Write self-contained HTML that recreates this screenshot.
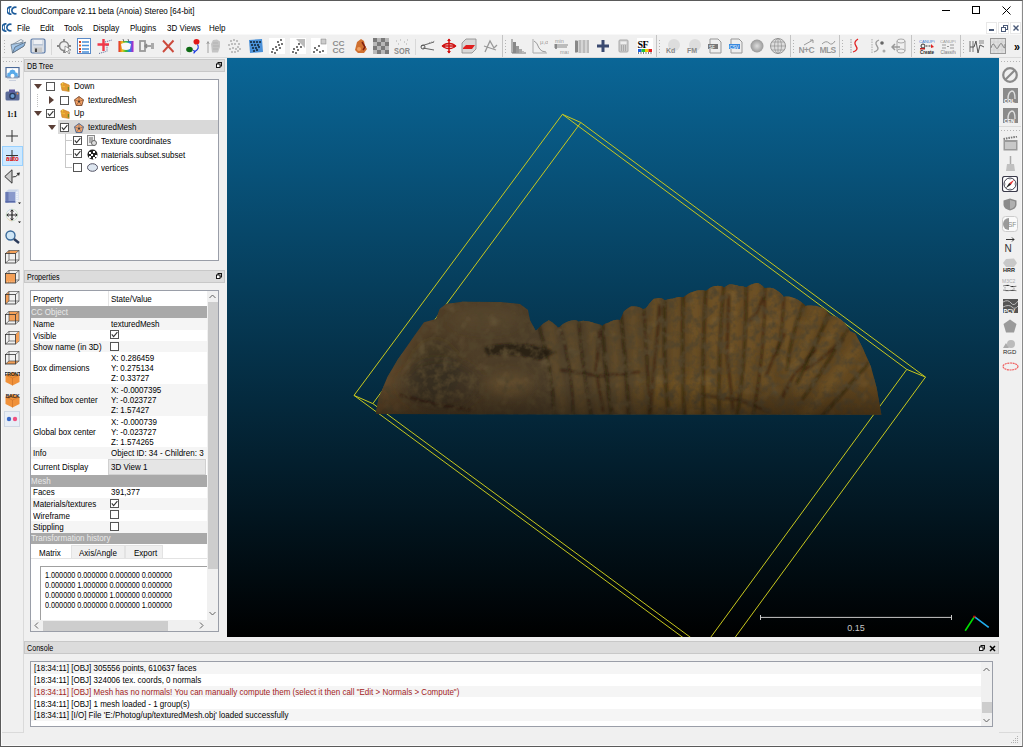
<!DOCTYPE html><html><head><meta charset="utf-8"><style>
html,body{margin:0;padding:0}
body{width:1023px;height:747px;overflow:hidden;background:#f0f0f0;position:relative;font-family:"Liberation Sans",sans-serif;font-size:9px;letter-spacing:0;color:#000}
.a{position:absolute}
.t{position:absolute;white-space:nowrap;line-height:11px;transform:scaleX(0.89);transform-origin:0 0}
.cb{position:absolute;width:7px;height:7px;border:1px solid #555;background:#fff}
</style></head><body>
<div class="a" style="left:0px;top:0px;width:1023px;height:747px;background:#f0f0f0"></div>
<div class="a" style="left:1px;top:1px;width:1021px;height:19px;background:#fff"></div>
<div class="a" style="left:1px;top:20px;width:1021px;height:14px;background:#fff"></div>
<div class="a" style="left:1px;top:34px;width:1021px;height:1px;background:#f8f8f8"></div>
<div class="a" style="left:1px;top:57px;width:1021px;height:1px;background:#dadada"></div>
<div class="t" style="left:20.5px;top:5.8px;">CloudCompare v2.11 beta (Anoia) Stereo [64-bit]</div>
<div class="t" style="left:16.5px;top:23.3px;">File</div>
<div class="t" style="left:39.5px;top:23.3px;">Edit</div>
<div class="t" style="left:64.0px;top:23.3px;">Tools</div>
<div class="t" style="left:93.0px;top:23.3px;">Display</div>
<div class="t" style="left:129.5px;top:23.3px;">Plugins</div>
<div class="t" style="left:166.5px;top:23.3px;">3D Views</div>
<div class="t" style="left:209.0px;top:23.3px;">Help</div>
<svg class="a" style="left:7px;top:6px;" width="11" height="9" viewBox="0 0 11 9"><g transform="scale(1.0)"><path d="M4.5 1 A3.6 3.6 0 1 0 4.5 8" fill="none" stroke="#1a5a9a" stroke-width="1.6"/><path d="M9.5 1.5 A3.3 3.3 0 1 0 9.5 7.5" fill="none" stroke="#1a5a9a" stroke-width="1.6"/><path d="M2.5 1V8" stroke="#1a5a9a" stroke-width="0.8"/></g></svg>
<svg class="a" style="left:2px;top:23px;" width="11" height="9" viewBox="0 0 11 9"><g transform="scale(1.0)"><path d="M4.5 1 A3.6 3.6 0 1 0 4.5 8" fill="none" stroke="#1a5a9a" stroke-width="1.6"/><path d="M9.5 1.5 A3.3 3.3 0 1 0 9.5 7.5" fill="none" stroke="#1a5a9a" stroke-width="1.6"/><path d="M2.5 1V8" stroke="#1a5a9a" stroke-width="0.8"/></g></svg>
<div class="a" style="left:942px;top:10px;width:8px;height:1px;background:#000"></div>
<div class="a" style="left:972px;top:6px;width:8px;height:8px;border:1px solid #000;box-sizing:border-box"></div>
<svg class="a" style="left:1002px;top:6px;" width="9" height="9" viewBox="0 0 9 9"><path d="M0.5 0.5L8.5 8.5M8.5 0.5L0.5 8.5" stroke="#000" stroke-width="1"/></svg>
<div class="a" style="left:986px;top:22px;width:11px;height:12px;background:#fff;border:1px solid #e8e8e8;box-sizing:border-box"></div>
<div class="a" style="left:998px;top:22px;width:11px;height:12px;background:#fff;border:1px solid #e8e8e8;box-sizing:border-box"></div>
<div class="a" style="left:1010px;top:22px;width:11px;height:12px;background:#fff;border:1px solid #e8e8e8;box-sizing:border-box"></div>
<div class="a" style="left:989px;top:29px;width:5px;height:1.5px;background:#4a5a78"></div>
<svg class="a" style="left:1001px;top:25px;" width="7" height="7" viewBox="0 0 7 7"><rect x="2.5" y="0.5" width="4" height="4" fill="none" stroke="#4a5a78"/><rect x="0.5" y="2.5" width="4" height="4" fill="#fff" stroke="#4a5a78"/></svg>
<svg class="a" style="left:1012.5px;top:25px;" width="6" height="6" viewBox="0 0 6 6"><path d="M0.5 0.5L5.5 5.5M5.5 0.5L0.5 5.5" stroke="#4a5a78" stroke-width="1.4"/></svg>
<svg width="0" height="0" style="position:absolute"><defs><linearGradient id="rb" x1="0" x2="1"><stop offset="0" stop-color="#e02020"/><stop offset="0.25" stop-color="#f0c020"/><stop offset="0.5" stop-color="#30c030"/><stop offset="0.75" stop-color="#2080f0"/><stop offset="1" stop-color="#c020c0"/></linearGradient></defs></svg>
<div class="a" style="left:4px;top:40px;width:1px;height:15px;background:repeating-linear-gradient(to bottom,#b4b4b4 0 1px,transparent 1px 3px)"></div>
<svg class="a" style="left:10px;top:38px;" width="16" height="16" viewBox="0 0 16 16"><path d="M1.5 7 L11 1.5 L13.5 3 L4 9 Z" fill="#f4f8fc" stroke="#7a8a9a" stroke-width="0.8"/><path d="M1 6.5 L2.5 15 L14 8 L12.5 4.5 Z" fill="#a8c8e8" stroke="#6a7a8a" stroke-width="0.8"/><path d="M2.5 15 L5 9 L15.5 4 L14 8 Z" fill="#90b8e0" stroke="#5a6a7a" stroke-width="0.8"/></svg>
<svg class="a" style="left:30px;top:38px;" width="16" height="16" viewBox="0 0 16 16"><rect x="1" y="1" width="14" height="14" rx="1.5" fill="#d8dde4" stroke="#5a7aa8" stroke-width="1.2"/><rect x="3" y="1.5" width="10" height="6" fill="#b8c4d4"/><rect x="3.5" y="2" width="9" height="4" fill="#eef0f4"/><rect x="4" y="9.5" width="8" height="5" fill="#c8c8c8"/><rect x="5" y="10.5" width="2" height="3.5" fill="#444"/></svg>
<div class="a" style="left:51px;top:39px;width:1px;height:16px;background:#d8d8d8"></div>
<svg class="a" style="left:56px;top:38px;" width="16" height="16" viewBox="0 0 16 16"><circle cx="8" cy="8" r="4.5" fill="none" stroke="#888" stroke-width="1.5"/><path d="M8 1V4M8 12V15M1 8H4M12 8H15" stroke="#888" stroke-width="1.8"/><path d="M9 8 L9 15 L11 13 L13 16 L14 15 L12 12 L15 12 Z" fill="#fff" stroke="#777" stroke-width="0.7"/></svg>
<svg class="a" style="left:76px;top:38px;" width="16" height="16" viewBox="0 0 16 16"><rect x="1.5" y="0.5" width="13" height="15" fill="#fff" stroke="#5a8ac8"/><rect x="3" y="3" width="2" height="2" fill="#d04020"/><rect x="3" y="6.5" width="2" height="2" fill="#e06020"/><rect x="3" y="10" width="2" height="2" fill="#d04020"/><rect x="3" y="13" width="2" height="1.5" fill="#c03020"/><path d="M6 4H13M6 7.5H13M6 11H13M6 14H13" stroke="#4a90d8" stroke-width="1.6"/></svg>
<svg class="a" style="left:97px;top:38px;" width="16" height="16" viewBox="0 0 16 16"><path d="M6.5 1V13M0.5 6.5H12" stroke="#f03848" stroke-width="2.4"/><path d="M8 4L15 2M10 7V14M2 15.5L9 13.5" stroke="#506090" stroke-width="0.9" stroke-dasharray="1.2 1"/></svg>
<svg class="a" style="left:118px;top:38px;" width="16" height="16" viewBox="0 0 16 16"><rect x="0.5" y="3" width="15" height="11" fill="url(#rb)"/><path d="M3 6 Q8 3 13 6 L12 11 Q8 13 4 11Z" fill="#f8f8f8"/><path d="M5 1 L6 4 M10 1 L11 4" stroke="#555" stroke-width="0.8"/></svg>
<svg class="a" style="left:139px;top:38px;" width="16" height="16" viewBox="0 0 16 16"><rect x="1" y="3" width="5" height="10" fill="none" stroke="#999" stroke-width="1.8"/><path d="M6 8H12M8 6 L6 8 L8 10" stroke="#888" stroke-width="1.5" fill="none"/><rect x="12" y="5" width="3" height="6" fill="#aaa"/></svg>
<svg class="a" style="left:160px;top:38px;" width="16" height="16" viewBox="0 0 16 16"><path d="M3 2.5L13.5 14M13.5 2.5L3 14" stroke="#cc4a3c" stroke-width="1.9"/></svg>
<div class="a" style="left:180px;top:39px;width:1px;height:16px;background:#d8d8d8"></div>
<svg class="a" style="left:185px;top:38px;" width="16" height="16" viewBox="0 0 16 16"><ellipse cx="11.5" cy="3.8" rx="3" ry="2.8" fill="#e01818"/><ellipse cx="4.5" cy="11.5" rx="3.3" ry="2.8" fill="#0e6a14"/><path d="M12.5 6.5 Q15 10.5 10 13.5 M8.2 12.2 L10 13.6 L8.6 15.4" stroke="#1838e0" stroke-width="1.2" fill="none"/></svg>
<svg class="a" style="left:206px;top:38px;" width="16" height="16" viewBox="0 0 16 16"><path d="M2 15V4M0.8 6L2 3.5L3.2 6" stroke="#999" stroke-width="0.9" fill="none"/><path d="M6 14.5 L5 6 L7 2 L11 1.5 L14 3.5 L14 9 L12 14.5 Z" fill="#c4c4c4"/><path d="M7 5L12 5M7 8L13 8M7 11L12 11" stroke="#aaa" stroke-width="0.6"/></svg>
<svg class="a" style="left:226px;top:38px;" width="16" height="16" viewBox="0 0 16 16"><circle cx="5" cy="3" r="0.75" fill="#777"/><circle cx="8" cy="2" r="0.75" fill="#777"/><circle cx="11" cy="3" r="0.75" fill="#777"/><circle cx="13" cy="6" r="0.75" fill="#777"/><circle cx="3" cy="7" r="0.75" fill="#777"/><circle cx="6" cy="6" r="0.75" fill="#777"/><circle cx="9" cy="6" r="0.75" fill="#777"/><circle cx="12" cy="9" r="0.75" fill="#777"/><circle cx="14" cy="11" r="0.75" fill="#777"/><circle cx="4" cy="11" r="0.75" fill="#777"/><circle cx="7" cy="10" r="0.75" fill="#777"/><circle cx="10" cy="11" r="0.75" fill="#777"/><circle cx="6" cy="14" r="0.75" fill="#777"/><circle cx="9" cy="14" r="0.75" fill="#777"/><circle cx="12" cy="13" r="0.75" fill="#777"/></svg>
<svg class="a" style="left:248px;top:38px;" width="16" height="16" viewBox="0 0 16 16"><path d="M1 2 L14 1 L15 14 L2 15 Z" fill="#4a90d8"/><circle cx="3" cy="4" r="1" fill="#123"/><circle cx="6" cy="4" r="1" fill="#123"/><circle cx="9" cy="4" r="1" fill="#123"/><circle cx="12" cy="4" r="1" fill="#123"/><circle cx="4" cy="7" r="1" fill="#123"/><circle cx="7" cy="7" r="1" fill="#123"/><circle cx="10" cy="7" r="1" fill="#123"/><circle cx="5" cy="10" r="1" fill="#123"/><circle cx="8" cy="10" r="1" fill="#123"/><circle cx="11" cy="9" r="1" fill="#123"/><circle cx="6" cy="13" r="1" fill="#123"/><circle cx="9" cy="12" r="1" fill="#123"/></svg>
<svg class="a" style="left:269px;top:38px;" width="16" height="16" viewBox="0 0 16 16"><rect x="0" y="0" width="16" height="16" fill="#fff"/><circle cx="12" cy="2" r="0.9" fill="#333"/><circle cx="9" cy="4" r="0.9" fill="#333"/><circle cx="13" cy="6" r="0.9" fill="#333"/><circle cx="10" cy="7" r="0.9" fill="#333"/><circle cx="7" cy="9" r="0.9" fill="#333"/><circle cx="4" cy="11" r="0.9" fill="#333"/><circle cx="8" cy="12" r="0.9" fill="#333"/><circle cx="3" cy="14" r="0.9" fill="#333"/><circle cx="6" cy="15" r="0.9" fill="#333"/><circle cx="11" cy="10" r="0.9" fill="#333"/></svg>
<svg class="a" style="left:290px;top:38px;" width="16" height="16" viewBox="0 0 16 16"><rect x="0" y="0" width="16" height="16" fill="#fff"/><path d="M6 1H15V10Z" fill="#bbb"/><circle cx="9" cy="6" r="0.9" fill="#333"/><circle cx="7" cy="9" r="0.9" fill="#333"/><circle cx="4" cy="11" r="0.9" fill="#333"/><circle cx="8" cy="12" r="0.9" fill="#333"/><circle cx="3" cy="14" r="0.9" fill="#333"/><circle cx="6" cy="15" r="0.9" fill="#333"/><circle cx="11" cy="9" r="0.9" fill="#333"/></svg>
<svg class="a" style="left:311px;top:38px;" width="16" height="16" viewBox="0 0 16 16"><rect x="0" y="0" width="16" height="16" fill="#fff"/><rect x="10" y="1" width="5" height="5" fill="#ccc" stroke="#888" stroke-width="0.6"/><circle cx="8" cy="8" r="0.9" fill="#333"/><circle cx="4" cy="10" r="0.9" fill="#333"/><circle cx="6" cy="12" r="0.9" fill="#333"/><circle cx="3" cy="14" r="0.9" fill="#333"/><circle cx="9" cy="14" r="0.9" fill="#333"/><circle cx="12" cy="13" r="0.9" fill="#333"/></svg>
<svg class="a" style="left:332px;top:38px;" width="16" height="16" viewBox="0 0 16 16"><text x="0.5" y="7.5" font-size="7.5" font-weight="bold" font-family="Liberation Sans" fill="#8a8a8a" textLength="12" lengthAdjust="spacingAndGlyphs">CC</text><text x="0.5" y="15" font-size="7.5" font-weight="bold" font-family="Liberation Sans" fill="#8a8a8a" textLength="12" lengthAdjust="spacingAndGlyphs">CC</text></svg>
<svg class="a" style="left:353px;top:38px;" width="16" height="16" viewBox="0 0 16 16"><path d="M4 4 L8 1 L11 3 L12 8 L14 11 L11 15 L5 15 L2 12 Z" fill="#d07030"/><path d="M9 4 L12 9 L10 12" stroke="#802010" stroke-width="1.5" fill="none"/><circle cx="6" cy="11" r="2" fill="#f0a060"/></svg>
<svg class="a" style="left:373px;top:38px;" width="16" height="16" viewBox="0 0 16 16"><rect x="0" y="0" width="4" height="4" fill="#7a7a7a"/><rect x="0" y="4" width="4" height="4" fill="#b8b8b8"/><rect x="0" y="8" width="4" height="4" fill="#7a7a7a"/><rect x="0" y="12" width="4" height="4" fill="#b8b8b8"/><rect x="4" y="0" width="4" height="4" fill="#b8b8b8"/><rect x="4" y="4" width="4" height="4" fill="#7a7a7a"/><rect x="4" y="8" width="4" height="4" fill="#b8b8b8"/><rect x="4" y="12" width="4" height="4" fill="#7a7a7a"/><rect x="8" y="0" width="4" height="4" fill="#7a7a7a"/><rect x="8" y="4" width="4" height="4" fill="#b8b8b8"/><rect x="8" y="8" width="4" height="4" fill="#7a7a7a"/><rect x="8" y="12" width="4" height="4" fill="#b8b8b8"/><rect x="12" y="0" width="4" height="4" fill="#b8b8b8"/><rect x="12" y="4" width="4" height="4" fill="#7a7a7a"/><rect x="12" y="8" width="4" height="4" fill="#b8b8b8"/><rect x="12" y="12" width="4" height="4" fill="#7a7a7a"/></svg>
<svg class="a" style="left:394px;top:38px;" width="16" height="16" viewBox="0 0 16 16"><text x="0" y="15.5" font-size="8.5" font-weight="bold" font-family="Liberation Sans" fill="#8a8a8a" textLength="16" lengthAdjust="spacingAndGlyphs">SOR</text><path d="M2 3h1M6 2h1M10 4h1M13 2h1M4 6h1M12 6h1" stroke="#aaa"/></svg>
<div class="a" style="left:415px;top:39px;width:1px;height:16px;background:#d8d8d8"></div>
<svg class="a" style="left:420px;top:38px;" width="16" height="16" viewBox="0 0 16 16"><path d="M1 8 L14 4 M3 10 L14 12" stroke="#666" stroke-width="1"/><circle cx="3" cy="9" r="2" fill="none" stroke="#555"/><path d="M9 5 L15 3" stroke="#888" stroke-dasharray="1 1"/></svg>
<svg class="a" style="left:441px;top:38px;" width="16" height="16" viewBox="0 0 16 16"><path d="M8 1V15M1 8H15" stroke="#d01010" stroke-width="1.5"/><path d="M6 3L8 0.5L10 3M6 13L8 15.5L10 13M3 6L0.5 8L3 10M13 6L15.5 8L13 10" fill="#d01010"/><ellipse cx="8" cy="8" rx="5" ry="2.5" fill="none" stroke="#d01010" stroke-width="1.3"/></svg>
<svg class="a" style="left:461px;top:38px;" width="16" height="16" viewBox="0 0 16 16"><path d="M1 5 L5 1 H15 V11 L11 15 H1 Z" fill="#d8d8d8" stroke="#888" stroke-width="0.8"/><path d="M2 10 L5 7 H14 L11 11 H2Z" fill="#e02020"/></svg>
<svg class="a" style="left:482px;top:38px;" width="16" height="16" viewBox="0 0 16 16"><path d="M3 14 L8 3 L12 10 L15 7 M2 8 L14 12" stroke="#999" stroke-width="1.3" fill="none"/></svg>
<div class="a" style="left:502px;top:35px;width:1px;height:22px;background:#c4c4c4"></div>
<div class="a" style="left:505px;top:40px;width:1px;height:15px;background:repeating-linear-gradient(to bottom,#b4b4b4 0 1px,transparent 1px 3px)"></div>
<svg class="a" style="left:511px;top:38px;" width="16" height="16" viewBox="0 0 16 16"><path d="M1 1V15H15" stroke="#777" fill="none"/><rect x="2" y="4" width="3" height="11" fill="#888"/><rect x="5" y="8" width="3" height="7" fill="#999"/><rect x="8" y="11" width="3" height="4" fill="#aaa"/><rect x="11" y="13" width="2" height="2" fill="#bbb"/></svg>
<svg class="a" style="left:532px;top:38px;" width="16" height="16" viewBox="0 0 16 16"><path d="M1 1V15H15" stroke="#aaa" fill="none"/><path d="M2 3 Q5 4 7 10 Q9 14 14 14" stroke="#999" fill="none"/><text x="8" y="6" font-size="6" fill="#999" font-family="Liberation Sans">μ,σ</text></svg>
<svg class="a" style="left:553px;top:38px;" width="16" height="16" viewBox="0 0 16 16"><text x="2" y="5" font-size="5.5" fill="#999" font-family="Liberation Sans">min</text><text x="7" y="15.5" font-size="5.5" fill="#999" font-family="Liberation Sans">max</text><path d="M1 7H15M1 9H14" stroke="#888" stroke-width="1"/><path d="M3 6V11" stroke="#777" stroke-width="1.5"/></svg>
<svg class="a" style="left:574px;top:38px;" width="16" height="16" viewBox="0 0 16 16"><rect x="1" y="2" width="14" height="13" fill="#bbb"/><path d="M4 2V15M8 2V15M12 2V15" stroke="#eee" stroke-width="1"/><rect x="1" y="3" width="3" height="11" fill="#888"/></svg>
<svg class="a" style="left:595px;top:38px;" width="16" height="16" viewBox="0 0 16 16"><path d="M8 2V14M2 8H14" stroke="#3a4a70" stroke-width="3"/></svg>
<svg class="a" style="left:616px;top:38px;" width="16" height="16" viewBox="0 0 16 16"><rect x="3" y="2" width="9" height="12" rx="1" fill="#ccc" stroke="#aaa"/><rect x="4.5" y="3.5" width="6" height="2.5" fill="#eee"/><path d="M5 8h1M7 8h1M9 8h1M5 10h1M7 10h1M9 10h1M5 12h1M7 12h1M9 12h1" stroke="#888"/></svg>
<svg class="a" style="left:637px;top:38px;" width="16" height="16" viewBox="0 0 16 16"><rect x="0" y="0" width="16" height="16" fill="#fff"/><text x="0.5" y="9.5" font-size="10" font-weight="bold" font-family="Liberation Serif" fill="#000" letter-spacing="-0.5">SF</text><rect x="1" y="11" width="3.5" height="3" fill="#2060e0"/><rect x="4.5" y="11" width="3.5" height="3" fill="#20c040"/><rect x="8" y="11" width="3.5" height="3" fill="#f0d000"/><rect x="11.5" y="11" width="3.5" height="3" fill="#e02020"/><path d="M1 15H15" stroke="#000" stroke-dasharray="1 1.5"/></svg>
<div class="a" style="left:656px;top:35px;width:1px;height:22px;background:#c4c4c4"></div>
<div class="a" style="left:659px;top:40px;width:1px;height:15px;background:repeating-linear-gradient(to bottom,#b4b4b4 0 1px,transparent 1px 3px)"></div>
<svg class="a" style="left:665px;top:38px;" width="16" height="16" viewBox="0 0 16 16"><circle cx="9" cy="7" r="6" fill="#ddd"/><text x="1" y="15" font-size="7" font-weight="bold" fill="#888" font-family="Liberation Sans">Kd</text></svg>
<svg class="a" style="left:686px;top:38px;" width="16" height="16" viewBox="0 0 16 16"><circle cx="9" cy="7" r="6" fill="#ddd"/><text x="1" y="15" font-size="7" font-weight="bold" fill="#888" font-family="Liberation Sans">FM</text></svg>
<svg class="a" style="left:707px;top:38px;" width="16" height="16" viewBox="0 0 16 16"><path d="M3 1H11L14 4V15H3Z" fill="#eee" stroke="#999"/><rect x="1" y="6" width="10" height="5" fill="#777"/><text x="2" y="10.5" font-size="4.5" fill="#fff" font-family="Liberation Sans">SF</text></svg>
<svg class="a" style="left:728px;top:38px;" width="16" height="16" viewBox="0 0 16 16"><path d="M3 1H11L14 4V15H3Z" fill="#eee" stroke="#999"/><rect x="1" y="6" width="11" height="5" fill="#3a8ae0"/><text x="1.5" y="10.5" font-size="4.5" fill="#fff" font-family="Liberation Sans">CSV</text></svg>
<svg class="a" style="left:749px;top:38px;" width="16" height="16" viewBox="0 0 16 16"><defs><radialGradient id="dg"><stop offset="0" stop-color="#ddd"/><stop offset="1" stop-color="#999"/></radialGradient></defs><circle cx="8" cy="8" r="6.5" fill="url(#dg)"/></svg>
<svg class="a" style="left:770px;top:38px;" width="16" height="16" viewBox="0 0 16 16"><circle cx="8" cy="8" r="7.5" fill="#ddd" stroke="#999"/><path d="M0.5 8H15.5M8 0.5V15.5M2 4H14M2 12H14" stroke="#888" stroke-width="0.6"/><ellipse cx="8" cy="8" rx="3.5" ry="7.5" fill="none" stroke="#888" stroke-width="0.6"/></svg>
<div class="a" style="left:790px;top:35px;width:1px;height:22px;background:#c4c4c4"></div>
<div class="a" style="left:793px;top:40px;width:1px;height:15px;background:repeating-linear-gradient(to bottom,#b4b4b4 0 1px,transparent 1px 3px)"></div>
<svg class="a" style="left:799px;top:38px;" width="16" height="16" viewBox="0 0 16 16"><text x="-0.5" y="15" font-size="8.5" font-weight="bold" fill="#999" font-family="Liberation Sans" letter-spacing="-0.6">N+C</text><path d="M5 7 L14 2 M11 2H14V5" stroke="#999" fill="none"/></svg>
<svg class="a" style="left:820px;top:38px;" width="16" height="16" viewBox="0 0 16 16"><text x="-0.5" y="15" font-size="8.5" font-weight="bold" fill="#999" font-family="Liberation Sans" letter-spacing="-0.6">MLS</text><path d="M2 6 Q6 2 9 5 T15 3" stroke="#999" fill="none"/></svg>
<div class="a" style="left:839px;top:35px;width:1px;height:22px;background:#c4c4c4"></div>
<div class="a" style="left:842px;top:40px;width:1px;height:15px;background:repeating-linear-gradient(to bottom,#b4b4b4 0 1px,transparent 1px 3px)"></div>
<svg class="a" style="left:849px;top:38px;" width="16" height="16" viewBox="0 0 16 16"><path d="M2 1V15" stroke="#999" stroke-dasharray="1.5 1"/><path d="M9 1 Q4 4 7 8 Q10 12 4 14" stroke="#e02020" stroke-width="1.3" fill="none"/></svg>
<svg class="a" style="left:870px;top:38px;" width="16" height="16" viewBox="0 0 16 16"><path d="M2 1V15" stroke="#aaa" stroke-dasharray="1.5 1"/><path d="M9 2 Q4 4 7 8 Q10 12 4 14" stroke="#999" stroke-width="1.3" fill="none"/><circle cx="12" cy="5" r="1.8" fill="#666"/><circle cx="14" cy="13" r="1.5" fill="#aaa"/></svg>
<svg class="a" style="left:891px;top:38px;" width="16" height="16" viewBox="0 0 16 16"><ellipse cx="10" cy="3" rx="4" ry="2" fill="none" stroke="#aaa"/><path d="M6 3V13M14 3V13" stroke="#aaa"/><ellipse cx="10" cy="13" rx="4" ry="2" fill="none" stroke="#aaa"/><path d="M1 9H9M4 6L1 9L4 12" stroke="#999" stroke-width="1.5" fill="none"/></svg>
<div class="a" style="left:911px;top:35px;width:1px;height:22px;background:#c4c4c4"></div>
<div class="a" style="left:914px;top:40px;width:1px;height:15px;background:repeating-linear-gradient(to bottom,#b4b4b4 0 1px,transparent 1px 3px)"></div>
<svg class="a" style="left:919px;top:38px;" width="16" height="16" viewBox="0 0 16 16"><text x="0" y="4.5" font-size="4.2" fill="#3a7ad0" font-family="Liberation Sans">CANUPO</text><circle cx="4" cy="8" r="2" fill="none" stroke="#333"/><path d="M7 8H12" stroke="#333" stroke-dasharray="1 0.5"/><path d="M12 6L15 9L12 10Z" fill="#e02020"/><rect x="1" y="10" width="5" height="1.5" fill="#c02020"/><text x="1" y="15.5" font-size="4.5" font-weight="bold" fill="#222" font-family="Liberation Sans">Create</text></svg>
<svg class="a" style="left:940px;top:38px;" width="16" height="16" viewBox="0 0 16 16"><text x="0" y="4.5" font-size="4.2" fill="#999" font-family="Liberation Sans">CANUPO</text><path d="M2 7H6M2 10H6M10 7H14M10 10H14M7 8.5H9" stroke="#999"/><text x="0.5" y="15.5" font-size="4.5" fill="#777" font-family="Liberation Sans">Classify</text></svg>
<div class="a" style="left:960px;top:35px;width:1px;height:22px;background:#c4c4c4"></div>
<div class="a" style="left:963px;top:40px;width:1px;height:15px;background:repeating-linear-gradient(to bottom,#b4b4b4 0 1px,transparent 1px 3px)"></div>
<svg class="a" style="left:969px;top:38px;" width="16" height="16" viewBox="0 0 16 16"><path d="M1 3V14M4 3V14" stroke="#888" stroke-width="1.2"/><path d="M1 9 L5 9 L7 3 L9 15 L11 7 L15 9" stroke="#555" stroke-width="1" fill="none"/><rect x="10" y="2" width="5" height="4" fill="#bbb"/></svg>
<svg class="a" style="left:990px;top:38px;" width="16" height="16" viewBox="0 0 16 16"><rect x="0.5" y="0.5" width="15" height="15" fill="#e0e0e0" stroke="#999"/><path d="M4 1V15M8 1V15M12 1V15M1 4H15M1 8H15M1 12H15" stroke="#c8c8c8" stroke-width="0.5"/><path d="M1 10 Q3 3 5 8 T9 8 T13 8 T15 6" stroke="#888" fill="none"/></svg>
<div class="t" style="left:1013.5px;top:41.8px;font-size:12px;font-weight:bold">&raquo;</div>
<div class="a" style="left:23px;top:58px;width:1px;height:675px;background:#dadada"></div>
<div class="a" style="left:1px;top:732px;width:23px;height:1px;background:#dadada"></div>
<div class="a" style="left:999px;top:732px;width:23px;height:1px;background:#dadada"></div>
<div class="a" style="left:3px;top:61px;width:19px;height:1px;background:repeating-linear-gradient(to right,#b4b4b4 0 1px,transparent 1px 3px)"></div>
<svg class="a" style="left:5px;top:67px;" width="15" height="15" viewBox="0 0 15 15"><rect x="1" y="0.5" width="13" height="9.5" fill="#fff" stroke="#4a6a9a" stroke-width="1.2"/><path d="M2 9.5 L2.5 6 L4.5 5.5 L5 3.5 L7.5 2.5 L10 3.5 L10.5 5.5 L12.5 6 L13 9.5Z" fill="#5aaaea"/><circle cx="7.5" cy="8.8" r="2" fill="#fff"/><path d="M2 11.5H13M4 13.5H11" stroke="#c0c8d8" stroke-width="0.8"/></svg>
<svg class="a" style="left:5px;top:89px;" width="15" height="12" viewBox="0 0 15 12"><rect x="0.5" y="2.5" width="14" height="9" rx="1.5" fill="#5a6a98"/><rect x="4" y="0.5" width="6" height="3" fill="#5a5aa0"/><circle cx="7.5" cy="7" r="3.3" fill="#2a3a5a"/><circle cx="7.5" cy="7" r="2" fill="#6a9ad0"/><circle cx="12.5" cy="4.5" r="0.9" fill="#f09040"/></svg>
<div class="t" style="left:6.5px;top:109.3px;font-weight:bold;font-family:'Liberation Serif',serif;font-size:9px;letter-spacing:-0.2px">1:1</div>
<svg class="a" style="left:6px;top:130px;" width="12" height="12" viewBox="0 0 12 12"><path d="M6 0V12M0 6H12" stroke="#333" stroke-width="1"/></svg>
<div class="a" style="left:2px;top:146px;width:21px;height:20px;background:#cce8ff;border:1px solid #99d1ff;box-sizing:border-box"></div>
<svg class="a" style="left:6px;top:150px;" width="12" height="11" viewBox="0 0 12 11"><path d="M6 0V11M0 5.5H12" stroke="#333" stroke-width="1"/></svg>
<div class="t" style="left:6.0px;top:154.8px;color:#e01010;font-weight:bold;font-size:7px;letter-spacing:-0.1px;line-height:8px">auto</div>
<svg class="a" style="left:4px;top:169px;" width="17" height="15" viewBox="0 0 17 15"><path d="M0.8 7.5 L8 0.8 V14.2 Z" fill="#ccc" stroke="#333" stroke-width="1"/><path d="M8.5 8 Q12 8.5 14.5 5" stroke="#333" fill="none" stroke-width="1"/><path d="M12.5 4 L16 3.5 L15 7Z" fill="#333"/></svg>
<svg class="a" style="left:5px;top:189px;" width="16" height="15" viewBox="0 0 16 15"><path d="M0.5 3 L3.5 0.5 H13.5 V11 L10.5 13.5 H0.5Z" fill="#c8d4e8"/><rect x="0.5" y="3" width="10" height="10.5" fill="#8a9acc"/><rect x="0.5" y="3" width="3" height="10.5" fill="#6a7ab4"/><rect x="0.5" y="12" width="10" height="1.5" fill="#5a6aa8"/><path d="M10.5 3 L13.5 0.5 V11 L10.5 13.5Z" fill="#dde6f4"/><path d="M12 3V12" stroke="#fff" stroke-dasharray="1 1"/><path d="M13 13.5H16L14.5 15Z" fill="#000"/></svg>
<svg class="a" style="left:5px;top:208px;" width="16" height="16" viewBox="0 0 16 16"><circle cx="7" cy="7" r="5.8" fill="none" stroke="#c8e0c8" stroke-width="0.8"/><path d="M2 4 A5.8 5.8 0 0 1 7 1.2" stroke="#c8d8f0" fill="none" stroke-width="0.8"/><path d="M7 12.8 A5.8 5.8 0 0 1 2.5 10.5" stroke="#f0d0b0" fill="none" stroke-width="0.8"/><path d="M7 2V12M2 7H12" stroke="#222" stroke-width="1.2"/><path d="M5.5 3.5L7 1.8L8.5 3.5M5.5 10.5L7 12.2L8.5 10.5M3.5 5.5L1.8 7L3.5 8.5M10.5 5.5L12.2 7L10.5 8.5" stroke="#222" fill="none" stroke-width="0.9"/><path d="M13 13.5H16L14.5 15Z" fill="#000"/></svg>
<svg class="a" style="left:5px;top:230px;" width="15" height="14" viewBox="0 0 15 14"><circle cx="5.5" cy="5.5" r="4.5" fill="#cfe6f6" stroke="#3a6a9a" stroke-width="1.4"/><path d="M9 9 L14 13" stroke="#2a3a5a" stroke-width="2.4"/></svg>
<svg class="a" style="left:5px;top:250px;" width="15" height="14" viewBox="0 0 15 14"><path d="M4 0.5H14L10.5 3.5H0.5Z" fill="#f4a058"/><rect x="4" y="0.5" width="10" height="9.5" fill="none" stroke="#555" stroke-width="0.7"/><path d="M0.5 3.5L4 0.5M10.5 3.5L14 0.5M0.5 13L4 10M10.5 13L14 10" stroke="#555" stroke-width="0.7"/><rect x="0.5" y="3.5" width="10" height="9.5" fill="none" stroke="#333" stroke-width="0.8"/></svg>
<svg class="a" style="left:5px;top:270px;" width="15" height="14" viewBox="0 0 15 14"><rect x="4" y="0.5" width="10" height="9.5" fill="none" stroke="#555" stroke-width="0.7"/><path d="M0.5 3.5L4 0.5M10.5 3.5L14 0.5M0.5 13L4 10M10.5 13L14 10" stroke="#555" stroke-width="0.7"/><rect x="0.5" y="3.5" width="10" height="9.5" fill="#f4a058"/><path d="M2 12H10" stroke="#fff" stroke-width="0.6" stroke-dasharray="1 1.2"/><rect x="0.5" y="3.5" width="10" height="9.5" fill="none" stroke="#333" stroke-width="0.8"/></svg>
<svg class="a" style="left:5px;top:291px;" width="15" height="14" viewBox="0 0 15 14"><path d="M0.5 3.5L4 0.5V10L0.5 13Z" fill="#f4a058"/><rect x="4" y="0.5" width="10" height="9.5" fill="none" stroke="#555" stroke-width="0.7"/><path d="M0.5 3.5L4 0.5M10.5 3.5L14 0.5M0.5 13L4 10M10.5 13L14 10" stroke="#555" stroke-width="0.7"/><rect x="0.5" y="3.5" width="10" height="9.5" fill="none" stroke="#333" stroke-width="0.8"/></svg>
<svg class="a" style="left:5px;top:311px;" width="15" height="14" viewBox="0 0 15 14"><rect x="4" y="0.5" width="10" height="9.5" fill="#f4a058"/><rect x="4" y="0.5" width="10" height="9.5" fill="none" stroke="#555" stroke-width="0.7"/><path d="M0.5 3.5L4 0.5M10.5 3.5L14 0.5M0.5 13L4 10M10.5 13L14 10" stroke="#555" stroke-width="0.7"/><rect x="0.5" y="3.5" width="10" height="9.5" fill="none" stroke="#333" stroke-width="0.8"/></svg>
<svg class="a" style="left:5px;top:331px;" width="15" height="14" viewBox="0 0 15 14"><rect x="4" y="0.5" width="10" height="9.5" fill="none" stroke="#555" stroke-width="0.7"/><path d="M0.5 3.5L4 0.5M10.5 3.5L14 0.5M0.5 13L4 10M10.5 13L14 10" stroke="#555" stroke-width="0.7"/><path d="M10.5 3.5L14 0.5V10L10.5 13Z" fill="#f4a058"/><rect x="0.5" y="3.5" width="10" height="9.5" fill="none" stroke="#333" stroke-width="0.8"/></svg>
<svg class="a" style="left:5px;top:351px;" width="15" height="14" viewBox="0 0 15 14"><path d="M4 10H14L10.5 13H0.5Z" fill="#f4a058"/><rect x="4" y="0.5" width="10" height="9.5" fill="none" stroke="#555" stroke-width="0.7"/><path d="M0.5 3.5L4 0.5M10.5 3.5L14 0.5M0.5 13L4 10M10.5 13L14 10" stroke="#555" stroke-width="0.7"/><rect x="0.5" y="3.5" width="10" height="9.5" fill="none" stroke="#333" stroke-width="0.8"/></svg>
<svg class="a" style="left:5px;top:370px;" width="15" height="16" viewBox="0 0 15 16"><path d="M7.5 2 L14.5 5 V12 L7.5 15.5 L0.5 12 V5 Z" fill="#f0913a"/><path d="M7.5 8 V15.5M0.5 5 L7.5 8 L14.5 5" stroke="#c87028" stroke-width="0.6" fill="none"/><text x="7.5" y="6" text-anchor="middle" font-size="5" font-weight="bold" fill="#222" font-family="Liberation Sans" letter-spacing="-0.2">FRONT</text></svg>
<svg class="a" style="left:5px;top:392px;" width="15" height="16" viewBox="0 0 15 16"><path d="M7.5 2 L14.5 5 V12 L7.5 15.5 L0.5 12 V5 Z" fill="#f0913a"/><path d="M7.5 8 V15.5M0.5 5 L7.5 8 L14.5 5" stroke="#c87028" stroke-width="0.6" fill="none"/><text x="7.5" y="6" text-anchor="middle" font-size="5" font-weight="bold" fill="#222" font-family="Liberation Sans" letter-spacing="-0.2">BACK</text></svg>
<div class="a" style="left:4px;top:411px;width:16px;height:16px;background:#e8eef6;border:1px solid #d0d8e4;box-sizing:border-box"></div>
<svg class="a" style="left:4px;top:411px;" width="16" height="16" viewBox="0 0 16 16"><circle cx="5" cy="8" r="2.2" fill="#3a6ac8"/><circle cx="11" cy="8" r="2.2" fill="#f05080"/></svg>
<div class="a" style="left:1001px;top:61px;width:19px;height:1px;background:repeating-linear-gradient(to right,#b4b4b4 0 1px,transparent 1px 3px)"></div>
<svg class="a" style="left:1002px;top:67px;" width="16" height="16" viewBox="0 0 16 16"><circle cx="8" cy="8" r="6.8" fill="none" stroke="#8a8a8a" stroke-width="2.2"/><path d="M3.5 12.5L12.5 3.5" stroke="#8a8a8a" stroke-width="2.2"/></svg>
<svg class="a" style="left:1003px;top:88px;" width="15" height="15" viewBox="0 0 15 15"><rect x="0" y="0" width="15" height="15" fill="#8a8a8a"/><path d="M5 11 Q5 4 9 3 Q12 3 12 11" stroke="#ddd" stroke-width="1.4" fill="none"/><text x="1" y="14.5" font-size="5" font-weight="bold" fill="#fff" font-family="Liberation Sans">COL</text></svg>
<svg class="a" style="left:1003px;top:108px;" width="15" height="15" viewBox="0 0 15 15"><rect x="0" y="0" width="15" height="15" fill="#8a8a8a"/><path d="M5 11 Q5 4 9 3 Q12 3 12 11" stroke="#ddd" stroke-width="1.4" fill="none"/><text x="1" y="14.5" font-size="5" font-weight="bold" fill="#fff" font-family="Liberation Sans">CEN</text></svg>
<div class="a" style="left:999px;top:126px;width:23px;height:1px;background:#dadada"></div>
<div class="a" style="left:1001px;top:130px;width:19px;height:1px;background:repeating-linear-gradient(to right,#b4b4b4 0 1px,transparent 1px 3px)"></div>
<svg class="a" style="left:1003px;top:136px;" width="15" height="15" viewBox="0 0 15 15"><rect x="0.5" y="4" width="14" height="10.5" fill="#9a9a9a"/><rect x="2" y="6" width="11" height="7" fill="#c8c8c8"/><path d="M0.5 3L14 0.5" stroke="#777" stroke-width="2" stroke-dasharray="1.5 1"/></svg>
<svg class="a" style="left:1005px;top:156px;" width="11" height="16" viewBox="0 0 11 16"><path d="M5.5 0V8" stroke="#aaa" stroke-width="1.5"/><path d="M2 8H9L10 15H1Z" fill="#c0c0c0"/></svg>
<svg class="a" style="left:1002px;top:176px;" width="16" height="16" viewBox="0 0 16 16"><rect x="0.5" y="0.5" width="15" height="15" rx="2" fill="#fff" stroke="#3a3a4a" stroke-width="1.2"/><circle cx="8" cy="8" r="6" fill="#fff" stroke="#3a3a4a" stroke-width="1"/><path d="M8 2.5V4M8 12V13.5M2.5 8H4M12 8H13.5" stroke="#888" stroke-width="0.6"/><path d="M12.2 3.8L7 7.2L8.8 9Z" fill="#e83030"/><path d="M3.8 12.2L9 8.8L7.2 7Z" fill="#222"/></svg>
<svg class="a" style="left:1003px;top:198px;" width="14" height="13" viewBox="0 0 14 13"><path d="M7 0.5 L13.5 2.5 V7 Q13 11 7 12.5 Q1 11 0.5 7 V2.5Z" fill="#8a8a8a"/><path d="M7 2 L12 3.5 V7 Q11.5 10 7 11Z" fill="#b0b0b0"/></svg>
<svg class="a" style="left:1002px;top:216px;" width="16" height="16" viewBox="0 0 16 16"><rect x="0.5" y="0.5" width="15" height="15" rx="3" fill="#fafafa" stroke="#ccc"/><path d="M7 2 A6 6 0 0 0 7 14Z" fill="#9a9a9a"/><text x="6" y="11" font-size="6.5" fill="#888" font-family="Liberation Sans">SF</text></svg>
<svg class="a" style="left:1004px;top:237px;" width="12" height="15" viewBox="0 0 12 15"><path d="M2 2.5H10M8 0.5L10 2.5L8 4.5" stroke="#222" stroke-width="0.9" fill="none"/><text x="0.5" y="14.5" font-size="10" fill="#333" font-family="Liberation Sans">N</text></svg>
<svg class="a" style="left:1002px;top:258px;" width="16" height="14" viewBox="0 0 16 14"><path d="M4 1 L12 0.5 L15 5 L12 9 H4 L1 5Z" fill="#c8c8c8"/><text x="1" y="13.5" font-size="5.5" fill="#222" font-family="Liberation Sans" font-weight="bold">HRR</text></svg>
<svg class="a" style="left:1002px;top:278px;" width="16" height="15" viewBox="0 0 16 15"><text x="0" y="5" font-size="5" fill="#aaa" font-family="Liberation Sans">M3C2</text><path d="M1 8L6 7L10 9L15 8M1 12L5 13L11 12L15 13M3 7V13M12 8V13" stroke="#777" stroke-width="0.8" stroke-dasharray="1 0.8"/></svg>
<svg class="a" style="left:1003px;top:299px;" width="15" height="14" viewBox="0 0 15 14"><rect x="0" y="0" width="15" height="14" fill="#555"/><path d="M0 3 Q5 0 8 4 T15 2M0 8 Q6 5 9 8 T15 7" stroke="#bbb" stroke-width="1" fill="none"/><text x="0.5" y="13.5" font-size="5.5" fill="#fff" font-family="Liberation Sans" font-weight="bold">PCV</text></svg>
<svg class="a" style="left:1003px;top:319px;" width="14" height="14" viewBox="0 0 14 14"><path d="M7 0.5 L13.5 5 L11 13.5 H3 L0.5 5Z" fill="#9a9a9a"/></svg>
<svg class="a" style="left:1002px;top:339px;" width="16" height="15" viewBox="0 0 16 15"><circle cx="9" cy="5" r="4" fill="#bbb"/><path d="M1 9 L4 4 L7 9Z" fill="#aaa"/><text x="1" y="14.5" font-size="6" fill="#222" font-family="Liberation Sans">RGD</text></svg>
<svg class="a" style="left:1002px;top:362px;" width="17" height="9" viewBox="0 0 17 9"><ellipse cx="8.5" cy="4.5" rx="7.5" ry="3.5" fill="none" stroke="#f06060" stroke-width="1.2" stroke-dasharray="2 0.6"/></svg>
<div class="a" style="left:24px;top:59px;width:201px;height:13px;background:#dcdcdc;border:1px solid #c8c8c8;box-sizing:border-box"></div>
<div class="t" style="left:26.7px;top:60.8px;font-size:8.5px;transform:scaleX(0.84)">DB Tree</div>
<svg class="a" style="left:215.5px;top:62px;" width="6" height="6" viewBox="0 0 6 6"><rect x="2" y="0.5" width="3.5" height="3.5" fill="none" stroke="#000" stroke-width="0.9"/><rect x="0.5" y="2" width="3.5" height="3.5" fill="#fff" stroke="#000" stroke-width="0.9"/></svg>
<div class="a" style="left:30px;top:79px;width:189px;height:182px;border:1px solid #9a9ea8;box-sizing:border-box;background:#fff"></div>
<div class="a" style="left:58px;top:120px;width:160px;height:14px;background:#d9d9d9"></div>
<svg class="a" style="left:34px;top:84px;" width="8" height="5" viewBox="0 0 8 5"><path d="M0 0H8L4 5Z" fill="#5a3f37"/></svg>
<div class="cb" style="left:46px;top:82px"></div>
<svg class="a" style="left:59.5px;top:81.5px;" width="10" height="10" viewBox="0 0 10 10"><path d="M0.8 1.8 L3 0.5 L9.2 3 V9.5 L2 8.3 Z" fill="#e39a30" stroke="#c88020" stroke-width="0.6"/><circle cx="2.5" cy="1.8" r="0.7" fill="#f8e040"/><circle cx="2" cy="4" r="0.6" fill="#f8e040"/><circle cx="4" cy="4.6" r="0.6" fill="#f8e040"/><rect x="7.8" y="5" width="1" height="3.5" fill="#508a20"/></svg>
<div class="t" style="left:74.0px;top:81.3px;">Down</div>
<div class="a" style="left:37px;top:94px;width:1px;height:13px;border-left:1px dotted #c0c0c0"></div>
<svg class="a" style="left:49px;top:96px;" width="5" height="8" viewBox="0 0 5 8"><path d="M0 0V8L5 4Z" fill="#5a3f37"/></svg>
<div class="cb" style="left:60px;top:96px"></div>
<svg class="a" style="left:73.5px;top:95.5px;" width="10" height="10" viewBox="0 0 10 10"><path d="M5 0.5 L9.5 3.8 L7.8 9.5 H2.2 L0.5 3.8 Z" fill="#f2a266" stroke="#6a3a20" stroke-width="0.8"/><path d="M5 0.5 L5 5.5 L0.5 3.8 M5 5.5 L9.5 3.8 M5 5.5 L2.2 9.5 M5 5.5 L7.8 9.5" stroke="#6a3a20" stroke-width="0.5" fill="none"/><circle cx="5" cy="5.5" r="0.9" fill="#333"/></svg>
<div class="t" style="left:88.0px;top:95.3px;">texturedMesh</div>
<svg class="a" style="left:34px;top:111px;" width="8" height="5" viewBox="0 0 8 5"><path d="M0 0H8L4 5Z" fill="#5a3f37"/></svg>
<div class="cb" style="left:46px;top:109px"><svg width="7" height="7" style="position:absolute;left:0;top:0"><path d="M0.8 3.4 L2.6 5.6 L6.4 1.1" fill="none" stroke="#333" stroke-width="1.1"/></svg></div>
<svg class="a" style="left:59.5px;top:108.5px;" width="10" height="10" viewBox="0 0 10 10"><path d="M0.8 1.8 L3 0.5 L9.2 3 V9.5 L2 8.3 Z" fill="#e39a30" stroke="#c88020" stroke-width="0.6"/><circle cx="2.5" cy="1.8" r="0.7" fill="#f8e040"/><circle cx="2" cy="4" r="0.6" fill="#f8e040"/><circle cx="4" cy="4.6" r="0.6" fill="#f8e040"/><rect x="7.8" y="5" width="1" height="3.5" fill="#508a20"/></svg>
<div class="t" style="left:74.0px;top:108.3px;">Up</div>
<svg class="a" style="left:48px;top:125px;" width="8" height="5" viewBox="0 0 8 5"><path d="M0 0H8L4 5Z" fill="#5a3f37"/></svg>
<div class="cb" style="left:60px;top:123px"><svg width="7" height="7" style="position:absolute;left:0;top:0"><path d="M0.8 3.4 L2.6 5.6 L6.4 1.1" fill="none" stroke="#333" stroke-width="1.1"/></svg></div>
<svg class="a" style="left:73.5px;top:122.5px;" width="10" height="10" viewBox="0 0 10 10"><path d="M5 0.5 L9.5 3.8 L7.8 9.5 H2.2 L0.5 3.8 Z" fill="#f2a266" stroke="#3a5a8a" stroke-width="0.8"/><path d="M5 0.5 L5 5.5 L0.5 3.8 M5 5.5 L9.5 3.8 M5 5.5 L2.2 9.5 M5 5.5 L7.8 9.5" stroke="#3a5a8a" stroke-width="0.5" fill="none"/><circle cx="5" cy="5.5" r="0.9" fill="#333"/></svg>
<div class="t" style="left:88.0px;top:122.3px;">texturedMesh</div>
<div class="a" style="left:65px;top:134px;width:1px;height:34px;background:#c8c8c8"></div>
<div class="a" style="left:65px;top:140px;width:7px;height:1px;background:#c8c8c8"></div>
<div class="a" style="left:65px;top:154px;width:7px;height:1px;background:#c8c8c8"></div>
<div class="a" style="left:65px;top:167px;width:7px;height:1px;background:#c8c8c8"></div>
<div class="cb" style="left:73px;top:136px"><svg width="7" height="7" style="position:absolute;left:0;top:0"><path d="M0.8 3.4 L2.6 5.6 L6.4 1.1" fill="none" stroke="#333" stroke-width="1.1"/></svg></div>
<svg class="a" style="left:87px;top:135px;" width="10" height="11" viewBox="0 0 10 11"><rect x="0.5" y="0.5" width="7" height="10" fill="#eee" stroke="#888"/><path d="M2 3H6M2 5H6M2 7H6" stroke="#666"/><circle cx="7" cy="8" r="2.5" fill="#ddd" stroke="#666"/></svg>
<div class="t" style="left:101.0px;top:135.8px;">Texture coordinates</div>
<div class="cb" style="left:73px;top:149px"><svg width="7" height="7" style="position:absolute;left:0;top:0"><path d="M0.8 3.4 L2.6 5.6 L6.4 1.1" fill="none" stroke="#333" stroke-width="1.1"/></svg></div>
<svg class="a" style="left:87px;top:149px;" width="11" height="11" viewBox="0 0 11 11"><circle cx="5.5" cy="5.5" r="5" fill="#222"/><path d="M2 3h2v2h-2zM6 2h2v2h-2zM4 5h2v2h-2zM8 6h2v2h-2zM2 7h2v2h-2zM6 8h2v2h-2z" fill="#fff"/></svg>
<div class="t" style="left:101.0px;top:149.8px;">materials.subset.subset</div>
<div class="cb" style="left:73px;top:163px"></div>
<svg class="a" style="left:87px;top:163px;" width="11" height="9" viewBox="0 0 11 9"><ellipse cx="5.5" cy="4.5" rx="5" ry="3.8" fill="#dde6f0" stroke="#556"/></svg>
<div class="t" style="left:101.0px;top:162.8px;">vertices</div>
<div class="a" style="left:24px;top:270px;width:201px;height:13px;background:#dcdcdc;border:1px solid #c8c8c8;box-sizing:border-box"></div>
<div class="t" style="left:26.7px;top:271.8px;font-size:8.5px;transform:scaleX(0.84)">Properties</div>
<svg class="a" style="left:215.5px;top:273px;" width="6" height="6" viewBox="0 0 6 6"><rect x="2" y="0.5" width="3.5" height="3.5" fill="none" stroke="#000" stroke-width="0.9"/><rect x="0.5" y="2" width="3.5" height="3.5" fill="#fff" stroke="#000" stroke-width="0.9"/></svg>
<div class="a" style="left:30px;top:290px;width:189px;height:342px;border:1px solid #9a9ea8;box-sizing:border-box;background:#fff"></div>
<div class="a" style="left:31px;top:291px;width:176px;height:15px;background:#fff"></div>
<div class="a" style="left:108px;top:291px;width:1px;height:15px;background:#e5e5e5"></div>
<div class="a" style="left:31px;top:306px;width:176px;height:1px;background:#e5e5e5"></div>
<div class="t" style="left:33.0px;top:293.8px;">Property</div>
<div class="t" style="left:111.0px;top:293.8px;">State/Value</div>
<div class="a" style="left:31px;top:306px;width:176px;height:12px;background:#a9a9a9"></div>
<div class="t" style="left:30.9px;top:307.3px;color:#eaeaea">CC Object</div>
<div class="a" style="left:31px;top:318px;width:176px;height:11.5px;background:#f5f5f5"></div>
<div class="t" style="left:32.8px;top:319.05px;">Name</div>
<div class="t" style="left:110.7px;top:319.05px;">texturedMesh</div>
<div class="a" style="left:31px;top:329.5px;width:176px;height:11.5px;background:#fff"></div>
<div class="t" style="left:32.8px;top:330.55px;">Visible</div>
<div class="cb" style="left:110px;top:330.25px"><svg width="7" height="7" style="position:absolute;left:0;top:0"><path d="M0.8 3.4 L2.6 5.6 L6.4 1.1" fill="none" stroke="#333" stroke-width="1.1"/></svg></div>
<div class="a" style="left:31px;top:341px;width:176px;height:11px;background:#f5f5f5"></div>
<div class="t" style="left:32.8px;top:341.8px;">Show name (in 3D)</div>
<div class="cb" style="left:110px;top:341.5px"></div>
<div class="a" style="left:31px;top:352px;width:176px;height:32px;background:#fff"></div>
<div class="t" style="left:32.8px;top:363.3px;">Box dimensions</div>
<div class="t" style="left:110.7px;top:353.2px;">X: 0.286459</div>
<div class="t" style="left:110.7px;top:363.3px;">Y: 0.275134</div>
<div class="t" style="left:110.7px;top:373.40000000000003px;">Z: 0.33727</div>
<div class="a" style="left:31px;top:384px;width:176px;height:32px;background:#f5f5f5"></div>
<div class="t" style="left:32.8px;top:395.3px;">Shifted box center</div>
<div class="t" style="left:110.7px;top:385.2px;">X: -0.0007395</div>
<div class="t" style="left:110.7px;top:395.3px;">Y: -0.023727</div>
<div class="t" style="left:110.7px;top:405.40000000000003px;">Z: 1.57427</div>
<div class="a" style="left:31px;top:416px;width:176px;height:31px;background:#fff"></div>
<div class="t" style="left:32.8px;top:426.8px;">Global box center</div>
<div class="t" style="left:110.7px;top:416.7px;">X: -0.000739</div>
<div class="t" style="left:110.7px;top:426.8px;">Y: -0.023727</div>
<div class="t" style="left:110.7px;top:436.90000000000003px;">Z: 1.574265</div>
<div class="a" style="left:31px;top:447px;width:176px;height:11.5px;background:#f5f5f5"></div>
<div class="t" style="left:32.8px;top:448.05px;">Info</div>
<div class="t" style="left:110.7px;top:448.05px;">Object ID: 34 - Children: 3</div>
<div class="a" style="left:31px;top:458.5px;width:176px;height:16px;background:#fff"></div>
<div class="t" style="left:32.8px;top:461.8px;">Current Display</div>
<div class="a" style="left:108px;top:458.5px;width:98px;height:16px;background:#e5e5e5;border:1px solid #d0d0d0;box-sizing:border-box"></div>
<div class="t" style="left:110.7px;top:461.8px;">3D View 1</div>
<div class="a" style="left:31px;top:474.5px;width:176px;height:12px;background:#a9a9a9"></div>
<div class="t" style="left:30.9px;top:475.8px;color:#eaeaea">Mesh</div>
<div class="a" style="left:31px;top:486.5px;width:176px;height:11px;background:#fff"></div>
<div class="t" style="left:32.8px;top:487.3px;">Faces</div>
<div class="t" style="left:110.7px;top:487.3px;">391,377</div>
<div class="a" style="left:31px;top:497.5px;width:176px;height:12px;background:#f5f5f5"></div>
<div class="t" style="left:32.8px;top:498.8px;">Materials/textures</div>
<div class="cb" style="left:110px;top:498.5px"><svg width="7" height="7" style="position:absolute;left:0;top:0"><path d="M0.8 3.4 L2.6 5.6 L6.4 1.1" fill="none" stroke="#333" stroke-width="1.1"/></svg></div>
<div class="a" style="left:31px;top:509.5px;width:176px;height:11.5px;background:#fff"></div>
<div class="t" style="left:32.8px;top:510.55px;">Wireframe</div>
<div class="cb" style="left:110px;top:510.25px"></div>
<div class="a" style="left:31px;top:521px;width:176px;height:11.5px;background:#f5f5f5"></div>
<div class="t" style="left:32.8px;top:522.05px;">Stippling</div>
<div class="cb" style="left:110px;top:521.75px"></div>
<div class="a" style="left:31px;top:532.5px;width:176px;height:11px;background:#a9a9a9"></div>
<div class="t" style="left:30.9px;top:533.3px;color:#eaeaea">Transformation history</div>
<div class="a" style="left:31px;top:543.5px;width:176px;height:77px;background:#fff"></div>
<div class="a" style="left:31px;top:545px;width:40px;height:14px;background:#fff"></div>
<div class="t" style="left:38.5px;top:547.8px;">Matrix</div>
<div class="a" style="left:71px;top:545px;width:54px;height:14px;background:#f0f0f0;border:1px solid #e3e3e3;box-sizing:border-box"></div>
<div class="t" style="left:78.5px;top:547.8px;">Axis/Angle</div>
<div class="a" style="left:125px;top:545px;width:38px;height:14px;background:#f0f0f0;border:1px solid #e3e3e3;box-sizing:border-box"></div>
<div class="t" style="left:133.5px;top:547.8px;">Export</div>
<div class="a" style="left:31px;top:558px;width:176px;height:1px;background:#e3e3e3"></div>
<div class="a" style="left:40px;top:566px;width:167px;height:54px;border:1px solid #a0a0a0;border-right:none;border-bottom:none;box-sizing:border-box;background:#fff"></div>
<div class="t" style="left:44.5px;top:569.8px;transform:scaleX(0.806)">1.000000 0.000000 0.000000 0.000000</div>
<div class="t" style="left:44.5px;top:579.9px;transform:scaleX(0.806)">0.000000 1.000000 0.000000 0.000000</div>
<div class="t" style="left:44.5px;top:590.0px;transform:scaleX(0.806)">0.000000 0.000000 1.000000 0.000000</div>
<div class="t" style="left:44.5px;top:600.0999999999999px;transform:scaleX(0.806)">0.000000 0.000000 0.000000 1.000000</div>
<div class="a" style="left:207px;top:291px;width:11px;height:329px;background:#f0f0f0"></div>
<div class="a" style="left:207px;top:620px;width:11px;height:11px;background:#f0f0f0"></div>
<div class="a" style="left:207.5px;top:302px;width:10px;height:267px;background:#cdcdcd"></div>
<svg class="a" style="left:209px;top:294px;" width="7" height="5" viewBox="0 0 7 5"><path d="M0.5 4 L3.5 1 L6.5 4" stroke="#606060" fill="none"/></svg>
<svg class="a" style="left:209px;top:611px;" width="7" height="5" viewBox="0 0 7 5"><path d="M0.5 1 L3.5 4 L6.5 1" stroke="#606060" fill="none"/></svg>
<div class="a" style="left:31px;top:620px;width:176px;height:11px;background:#f0f0f0"></div>
<div class="a" style="left:43px;top:620.5px;width:125px;height:10px;background:#cdcdcd"></div>
<svg class="a" style="left:34px;top:622px;" width="5" height="7" viewBox="0 0 5 7"><path d="M4 0.5 L1 3.5 L4 6.5" stroke="#606060" fill="none"/></svg>
<svg class="a" style="left:199px;top:622px;" width="5" height="7" viewBox="0 0 5 7"><path d="M1 0.5 L4 3.5 L1 6.5" stroke="#606060" fill="none"/></svg>
<div class="a" style="left:227px;top:58px;width:772px;height:579px;background:linear-gradient(to bottom,rgb(10,102,151),#000)"></div>
<svg class="a" style="left:227px;top:58px" width="772" height="579" viewBox="0 0 772 579">
<defs>
<clipPath id="rc"><path d="M149.0,354.0 L151.7,340.0 L160.4,319.0 L170.8,301.6 L186.5,279.0 L197.0,264.2 L209.0,261.0 L212.6,251.0 L219.0,246.0 L235.2,243.8 L273.0,244.0 L293.0,246.0 L301.0,252.0 L303.0,262.3 L308.6,272.4 L310.2,271.6 L311.9,269.7 L313.5,268.0 L315.2,266.6 L316.8,265.3 L318.5,264.2 L320.1,263.2 L321.8,262.3 L323.3,263.2 L324.8,264.1 L326.4,265.2 L327.9,266.4 L329.5,267.8 L331.0,269.4 L332.6,269.0 L334.2,267.5 L335.8,266.3 L337.3,265.3 L338.9,264.4 L340.5,263.7 L342.1,263.2 L343.7,262.7 L345.2,262.4 L346.8,262.3 L348.4,262.3 L350.0,262.5 L351.5,263.8 L353.1,263.2 L354.6,262.9 L356.2,262.8 L357.8,262.9 L359.3,263.0 L360.9,263.2 L362.4,263.5 L364.0,263.9 L365.5,264.3 L367.1,264.9 L368.6,265.5 L370.2,265.8 L371.9,266.2 L373.5,266.8 L375.2,267.9 L376.8,266.4 L378.5,265.5 L380.1,264.9 L381.8,264.4 L383.4,263.6 L385.0,262.9 L386.6,262.3 L388.2,261.9 L389.8,261.7 L391.4,261.7 L393.0,262.0 L394.9,258.1 L396.8,253.5 L398.2,252.2 L399.8,251.1 L401.2,250.1 L402.8,249.1 L404.2,248.3 L405.8,248.3 L407.2,248.3 L408.8,248.5 L410.2,248.8 L411.8,249.1 L413.2,249.6 L414.8,250.2 L416.2,251.2 L417.8,250.5 L419.2,249.8 L420.8,247.7 L422.2,245.8 L423.8,244.0 L425.2,242.3 L426.8,240.8 L428.2,240.4 L429.8,240.2 L431.2,240.0 L432.8,240.0 L434.2,240.1 L435.9,241.0 L437.5,242.3 L439.1,241.9 L440.7,241.3 L442.3,241.0 L443.9,240.8 L445.5,240.8 L447.0,240.2 L448.5,239.7 L450.0,239.3 L451.5,239.1 L453.0,239.0 L454.5,239.1 L456.0,239.6 L457.5,238.6 L459.0,237.3 L460.5,236.2 L462.1,235.3 L463.6,234.6 L465.2,233.9 L466.8,233.4 L468.3,232.9 L469.9,232.6 L471.4,232.3 L473.0,232.2 L474.7,232.2 L476.3,232.3 L478.0,232.7 L479.6,232.5 L481.3,231.0 L482.9,229.9 L484.6,229.0 L486.2,228.5 L487.8,228.1 L489.3,227.9 L490.9,227.8 L492.5,227.9 L494.1,228.1 L495.7,228.6 L497.3,229.7 L498.8,228.3 L500.4,227.4 L502.0,226.6 L503.6,226.5 L505.3,226.6 L506.9,226.7 L508.5,227.0 L510.2,227.4 L511.8,228.0 L513.4,228.0 L515.0,228.2 L516.6,228.6 L518.3,229.2 L519.9,229.1 L521.5,227.8 L523.1,226.9 L524.7,226.2 L526.4,225.7 L528.0,225.3 L529.6,225.1 L531.2,225.0 L532.8,225.9 L534.3,227.0 L535.9,228.2 L537.4,229.9 L539.0,229.9 L540.5,229.7 L542.1,229.7 L543.6,229.8 L545.2,230.2 L546.7,230.6 L548.4,231.5 L550.0,232.5 L551.7,233.7 L553.4,235.0 L555.1,236.7 L556.7,238.9 L558.4,238.4 L560.0,238.4 L561.5,238.5 L563.1,238.8 L564.6,239.2 L566.2,239.7 L567.7,240.3 L569.3,241.0 L570.8,241.8 L572.4,242.7 L573.9,243.8 L575.5,244.9 L577.0,246.3 L578.6,248.1 L580.1,247.6 L581.7,247.6 L583.2,247.5 L584.8,247.5 L586.4,247.7 L587.9,247.8 L589.5,248.1 L591.0,248.4 L592.6,248.9 L594.1,249.4 L595.7,249.9 L597.2,250.6 L598.8,252.1 L600.4,253.7 L602.1,255.4 L603.7,257.6 L605.3,257.8 L606.9,258.1 L608.5,258.6 L610.1,259.4 L611.8,260.3 L613.4,261.3 L615.0,262.5 L616.6,263.9 L618.3,265.9 L619.9,268.1 L621.6,270.6 L623.2,273.3 L624.9,273.7 L626.5,274.7 L628.2,275.2 L636.0,290.7 L643.8,308.2 L649.6,329.6 L654.4,356.7 L149.0,356.0Z"/></clipPath>
<filter id="nz" x="0" y="0" width="100%" height="100%"><feTurbulence type="fractalNoise" baseFrequency="0.12" numOctaves="3" seed="5"/><feColorMatrix type="matrix" values="0 0 0 0 0.1  0 0 0 0 0.07  0 0 0 0 0.03  0 0 0 -2.6 1.55"/></filter>
<filter id="nz2" x="0" y="0" width="100%" height="100%"><feTurbulence type="fractalNoise" baseFrequency="0.07" numOctaves="2" seed="11"/><feColorMatrix type="matrix" values="0 0 0 0 0.55  0 0 0 0 0.42  0 0 0 0 0.2  0 0 0 3 -1.75"/></filter>
<filter id="bl"><feGaussianBlur stdDeviation="1"/></filter><filter id="bl2"><feGaussianBlur stdDeviation="3"/></filter>
<filter id="bl4"><feGaussianBlur stdDeviation="6"/></filter>
<linearGradient id="rg" x1="0" x2="1"><stop offset="0" stop-color="#6e5230"/><stop offset="0.1" stop-color="#56442c"/><stop offset="0.3" stop-color="#50422e"/><stop offset="0.5" stop-color="#644a24"/><stop offset="1" stop-color="#725222"/></linearGradient>
<linearGradient id="bd" x1="0" y1="0" x2="0" y2="1"><stop offset="0" stop-color="#140c04" stop-opacity="0"/><stop offset="1" stop-color="#140c04" stop-opacity="0.45"/></linearGradient>
</defs>
<g stroke="#c8c81e" stroke-width="1" fill="none"><line x1="335.4" y1="56.3" x2="127.0" y2="337.4"/><line x1="335.4" y1="56.3" x2="679.8" y2="311.4"/><line x1="127.0" y1="337.4" x2="473.9" y2="592.7"/><line x1="679.8" y1="311.4" x2="473.9" y2="592.7"/><line x1="353.8" y1="64.5" x2="145.8" y2="345.6"/><line x1="353.8" y1="64.5" x2="698.5" y2="319.1"/><line x1="145.8" y1="345.6" x2="492.5" y2="600.7"/><line x1="698.5" y1="319.1" x2="492.5" y2="600.7"/><line x1="335.4" y1="56.3" x2="353.8" y2="64.5"/><line x1="127.0" y1="337.4" x2="145.8" y2="345.6"/><line x1="679.8" y1="311.4" x2="698.5" y2="319.1"/><line x1="473.9" y1="592.7" x2="492.5" y2="600.7"/></g>
<g clip-path="url(#rc)">
<rect x="140" y="220" width="670" height="140" fill="url(#rg)"/>
<g filter="url(#bl4)">
<ellipse cx="213" cy="327" rx="40" ry="25" fill="#3a3226" opacity="0.6"/>
<ellipse cx="283" cy="327" rx="22" ry="12" fill="#8a6a3a" opacity="0.45"/>
<ellipse cx="513" cy="262" rx="60" ry="35" fill="#765828" opacity="0.5"/>
<ellipse cx="463" cy="337" rx="50" ry="20" fill="#7a5a24" opacity="0.5"/>
<ellipse cx="208" cy="312" rx="25" ry="30" fill="#2e281e" opacity="0.35"/>
<ellipse cx="258" cy="260" rx="35" ry="12" fill="#6a5638" opacity="0.5"/>
</g>
<g filter="url(#bl2)"><path d="M321.5,264.2 Q329.2,311.1 336.9,358.0" stroke="#8e6c34" stroke-width="10.6" stroke-opacity="0.35" fill="none" stroke-linecap="round"/><path d="M341.6,260.7 Q348.4,309.3 355.3,358.0" stroke="#8e6c34" stroke-width="12.4" stroke-opacity="0.35" fill="none" stroke-linecap="round"/><path d="M363.2,259.7 Q368.9,308.8 374.6,358.0" stroke="#8e6c34" stroke-width="9.5" stroke-opacity="0.35" fill="none" stroke-linecap="round"/><path d="M384.5,258.3 Q389.0,308.1 393.5,358.0" stroke="#8e6c34" stroke-width="9.7" stroke-opacity="0.35" fill="none" stroke-linecap="round"/><path d="M405.2,250.1 Q408.8,304.0 412.4,358.0" stroke="#8e6c34" stroke-width="10.5" stroke-opacity="0.35" fill="none" stroke-linecap="round"/><path d="M427.3,240.9 Q429.7,299.4 432.1,358.0" stroke="#8e6c34" stroke-width="9.2" stroke-opacity="0.35" fill="none" stroke-linecap="round"/><path d="M447.2,235.1 Q448.3,296.5 449.4,358.0" stroke="#8e6c34" stroke-width="10.7" stroke-opacity="0.35" fill="none" stroke-linecap="round"/><path d="M467.7,230.3 Q467.3,294.2 467.0,358.0" stroke="#8e6c34" stroke-width="10.8" stroke-opacity="0.35" fill="none" stroke-linecap="round"/><path d="M488.2,225.3 Q486.2,291.6 484.2,358.0" stroke="#8e6c34" stroke-width="11.8" stroke-opacity="0.35" fill="none" stroke-linecap="round"/><path d="M508.3,223.5 Q504.7,290.8 501.1,358.0" stroke="#8e6c34" stroke-width="11.1" stroke-opacity="0.35" fill="none" stroke-linecap="round"/><path d="M528.5,223.9 Q523.4,291.0 518.2,358.0" stroke="#8e6c34" stroke-width="10.2" stroke-opacity="0.35" fill="none" stroke-linecap="round"/><path d="M547.3,228.4 Q542.7,278.0 538.2,327.6" stroke="#8e6c34" stroke-width="10.7" stroke-opacity="0.35" fill="none" stroke-linecap="round"/><path d="M567.6,237.2 Q561.4,271.0 555.3,304.8" stroke="#8e6c34" stroke-width="11.0" stroke-opacity="0.35" fill="none" stroke-linecap="round"/><path d="M591.2,246.7 Q578.0,283.0 564.8,319.3" stroke="#8e6c34" stroke-width="12.1" stroke-opacity="0.35" fill="none" stroke-linecap="round"/><path d="M613.5,259.4 Q592.8,296.7 572.1,334.1" stroke="#8e6c34" stroke-width="10.3" stroke-opacity="0.35" fill="none" stroke-linecap="round"/><path d="M633.1,285.3 Q605.2,322.2 577.4,359.2" stroke="#8e6c34" stroke-width="11.3" stroke-opacity="0.35" fill="none" stroke-linecap="round"/></g><g filter="url(#bl)"><path d="M311.0,264.7 Q325.5,311.3 327.5,358.0" stroke="#1c120a" stroke-width="2.6" stroke-opacity="0.5" fill="none"/><path d="M331.9,263.7 Q345.8,310.8 346.3,358.0" stroke="#1c120a" stroke-width="1.9" stroke-opacity="0.5" fill="none"/><path d="M351.3,257.7 Q354.8,307.9 364.3,358.0" stroke="#1c120a" stroke-width="2.0" stroke-opacity="0.5" fill="none"/><path d="M375.1,261.6 Q377.4,309.8 385.0,358.0" stroke="#1c120a" stroke-width="2.9" stroke-opacity="0.5" fill="none"/><path d="M393.8,254.9 Q399.1,306.5 402.1,358.0" stroke="#1c120a" stroke-width="2.7" stroke-opacity="0.5" fill="none"/><path d="M416.6,245.2 Q420.3,301.6 422.7,358.0" stroke="#1c120a" stroke-width="1.9" stroke-opacity="0.5" fill="none"/><path d="M437.9,236.5 Q435.6,297.2 441.5,358.0" stroke="#1c120a" stroke-width="2.8" stroke-opacity="0.5" fill="none"/><path d="M456.4,233.6 Q454.3,295.8 457.4,358.0" stroke="#1c120a" stroke-width="2.6" stroke-opacity="0.5" fill="none"/><path d="M479.0,227.1 Q475.0,292.5 476.5,358.0" stroke="#1c120a" stroke-width="2.9" stroke-opacity="0.5" fill="none"/><path d="M497.3,223.5 Q491.0,290.7 491.9,358.0" stroke="#1c120a" stroke-width="2.6" stroke-opacity="0.5" fill="none"/><path d="M519.2,223.6 Q520.0,290.8 510.4,358.0" stroke="#1c120a" stroke-width="2.8" stroke-opacity="0.5" fill="none"/><path d="M537.9,224.3 Q538.7,291.1 526.1,358.0" stroke="#1c120a" stroke-width="2.0" stroke-opacity="0.5" fill="none"/><path d="M556.7,232.5 Q557.1,264.9 550.3,297.2" stroke="#1c120a" stroke-width="2.0" stroke-opacity="0.5" fill="none"/><path d="M578.5,241.8 Q562.9,277.1 560.2,312.3" stroke="#1c120a" stroke-width="2.7" stroke-opacity="0.5" fill="none"/><path d="M603.9,251.7 Q587.6,289.0 569.3,326.2" stroke="#1c120a" stroke-width="3.0" stroke-opacity="0.5" fill="none"/><path d="M623.0,267.0 Q601.7,304.5 574.8,342.0" stroke="#1c120a" stroke-width="2.6" stroke-opacity="0.5" fill="none"/><path d="M643.1,303.5 Q610.9,339.9 579.9,376.3" stroke="#1c120a" stroke-width="3.0" stroke-opacity="0.5" fill="none"/>
<path d="M256,289 Q293,280 330,294 L313,302 Q283,294 261,298Z" fill="#22180c" opacity="0.75"/><path d="M537,238 L529,256 L521.5,263.6" stroke="#1a1008" stroke-width="3.2" opacity="0.4" fill="none" stroke-linejoin="round"/><path d="M558,275 L546.7,298.5 L539,318" stroke="#1a1008" stroke-width="3.2" opacity="0.4" fill="none" stroke-linejoin="round"/><path d="M589,290.7 L566,318 L554.5,341" stroke="#1a1008" stroke-width="3.2" opacity="0.4" fill="none" stroke-linejoin="round"/><path d="M502,236.39999999999998 L500,294.6 L506,352.8" stroke="#1a1008" stroke-width="3.2" opacity="0.4" fill="none" stroke-linejoin="round"/><path d="M616.6,281 L597,298.5 L578,312" stroke="#1a1008" stroke-width="3.2" opacity="0.4" fill="none" stroke-linejoin="round"/><path d="M373,272 L369,312 L376,354" stroke="#1a1008" stroke-width="3.2" opacity="0.4" fill="none" stroke-linejoin="round"/><path d="M433,247 L428,302 L423,354" stroke="#1a1008" stroke-width="3.2" opacity="0.4" fill="none" stroke-linejoin="round"/><path d="M333,312 L373,318 L413,314" stroke="#1a1008" stroke-width="3.2" opacity="0.4" fill="none" stroke-linejoin="round"/><path d="M473,337 L513,342 L543,354" stroke="#1a1008" stroke-width="3.2" opacity="0.4" fill="none" stroke-linejoin="round"/><path d="M173,337 L213,347 L243,352" stroke="#1a1008" stroke-width="3.2" opacity="0.4" fill="none" stroke-linejoin="round"/>

</g>
<rect x="140" y="220" width="670" height="140" filter="url(#nz)"/>
<rect x="140" y="220" width="670" height="140" filter="url(#nz2)" opacity="0.15"/>
<rect x="140" y="220" width="670" height="140" fill="#100800" opacity="0.1"/>
<rect x="140" y="325" width="670" height="35" fill="url(#bd)"/>
</g>
<line x1="533" y1="559.4" x2="725" y2="559.4" stroke="#c8c8c8" stroke-width="1"/>
<line x1="533.5" y1="557" x2="533.5" y2="562" stroke="#c8c8c8"/><line x1="724.5" y1="557" x2="724.5" y2="562" stroke="#c8c8c8"/>
<text x="629" y="572.5" text-anchor="middle" font-size="9" fill="#c8c8c8" font-family="Liberation Sans" letter-spacing="0">0.15</text>
<line x1="747.3" y1="558.7" x2="738.2" y2="572.8" stroke="#00e000" stroke-width="1.6"/>
<line x1="747.3" y1="558.7" x2="761.7" y2="569.3" stroke="#20b0f0" stroke-width="1.6"/>
<rect x="746.3" y="557.7" width="2" height="2" fill="#e00000"/>
</svg>
<div class="a" style="left:24px;top:641px;width:975px;height:13px;background:#dcdcdc;border:1px solid #c8c8c8;box-sizing:border-box"></div>
<div class="t" style="left:26.7px;top:642.8px;font-size:8.5px;transform:scaleX(0.84)">Console</div>
<svg class="a" style="left:979.0px;top:645px;" width="6" height="6" viewBox="0 0 6 6"><rect x="2" y="0.5" width="3.5" height="3.5" fill="none" stroke="#000" stroke-width="0.9"/><rect x="0.5" y="2" width="3.5" height="3.5" fill="#fff" stroke="#000" stroke-width="0.9"/></svg>
<svg class="a" style="left:989px;top:645px;" width="7" height="7" viewBox="0 0 7 7"><path d="M1 1L6 6M6 1L1 6" stroke="#000" stroke-width="1.5"/></svg>
<div class="a" style="left:30px;top:661px;width:963px;height:66px;border:1px solid #9a9ea8;box-sizing:border-box;background:#fff"></div>
<div class="a" style="left:31px;top:662.0px;width:950px;height:11.75px;background:#f5f5f5"></div>
<div class="t" style="left:33.5px;top:663.3px;color:#000">[18:34:11] [OBJ] 305556 points, 610637 faces</div>
<div class="t" style="left:33.5px;top:675.05px;color:#000">[18:34:11] [OBJ] 324006 tex. coords, 0 normals</div>
<div class="a" style="left:31px;top:685.5px;width:950px;height:11.75px;background:#f5f5f5"></div>
<div class="t" style="left:33.5px;top:686.8px;color:#a21c1c">[18:34:11] [OBJ] Mesh has no normals! You can manually compute them (select it then call "Edit &gt; Normals &gt; Compute")</div>
<div class="t" style="left:33.5px;top:698.55px;color:#000">[18:34:11] [OBJ] 1 mesh loaded - 1 group(s)</div>
<div class="a" style="left:31px;top:709.0px;width:950px;height:11.75px;background:#f5f5f5"></div>
<div class="t" style="left:33.5px;top:710.3px;color:#000">[18:34:11] [I/O] File 'E:/Photog/up/texturedMesh.obj' loaded successfully</div>
<div class="a" style="left:981px;top:662px;width:11px;height:64px;background:#f0f0f0"></div>
<div class="a" style="left:981.5px;top:702px;width:10px;height:11px;background:#cdcdcd"></div>
<svg class="a" style="left:983px;top:666.5px;" width="7" height="5" viewBox="0 0 7 5"><path d="M0.5 4 L3.5 1 L6.5 4" stroke="#606060" fill="none"/></svg>
<svg class="a" style="left:983px;top:717.5px;" width="7" height="5" viewBox="0 0 7 5"><path d="M0.5 1 L3.5 4 L6.5 1" stroke="#606060" fill="none"/></svg>
<svg class="a" style="left:1010px;top:735px;" width="10" height="10" viewBox="0 0 10 10"><g fill="#b0b0b0"><rect x="7" y="1" width="1" height="1"/><rect x="5" y="3" width="1" height="1"/><rect x="7" y="3" width="1" height="1"/><rect x="3" y="5" width="1" height="1"/><rect x="5" y="5" width="1" height="1"/><rect x="7" y="5" width="1" height="1"/><rect x="1" y="7" width="1" height="1"/><rect x="3" y="7" width="1" height="1"/><rect x="5" y="7" width="1" height="1"/><rect x="7" y="7" width="1" height="1"/></g></svg>
<div class="a" style="left:1px;top:1px;width:1px;height:745px;background:#fafafa"></div>
<div class="a" style="left:1px;top:745px;width:1021px;height:1px;background:#fafafa"></div>
<div class="a" style="left:1021px;top:1px;width:1px;height:745px;background:#f6f6f6"></div>
<div class="a" style="left:0px;top:0px;width:1023px;height:747px;border:1px solid #5a5a5a;border-right-color:#8a8a8a;box-sizing:border-box;pointer-events:none"></div>
</body></html>
